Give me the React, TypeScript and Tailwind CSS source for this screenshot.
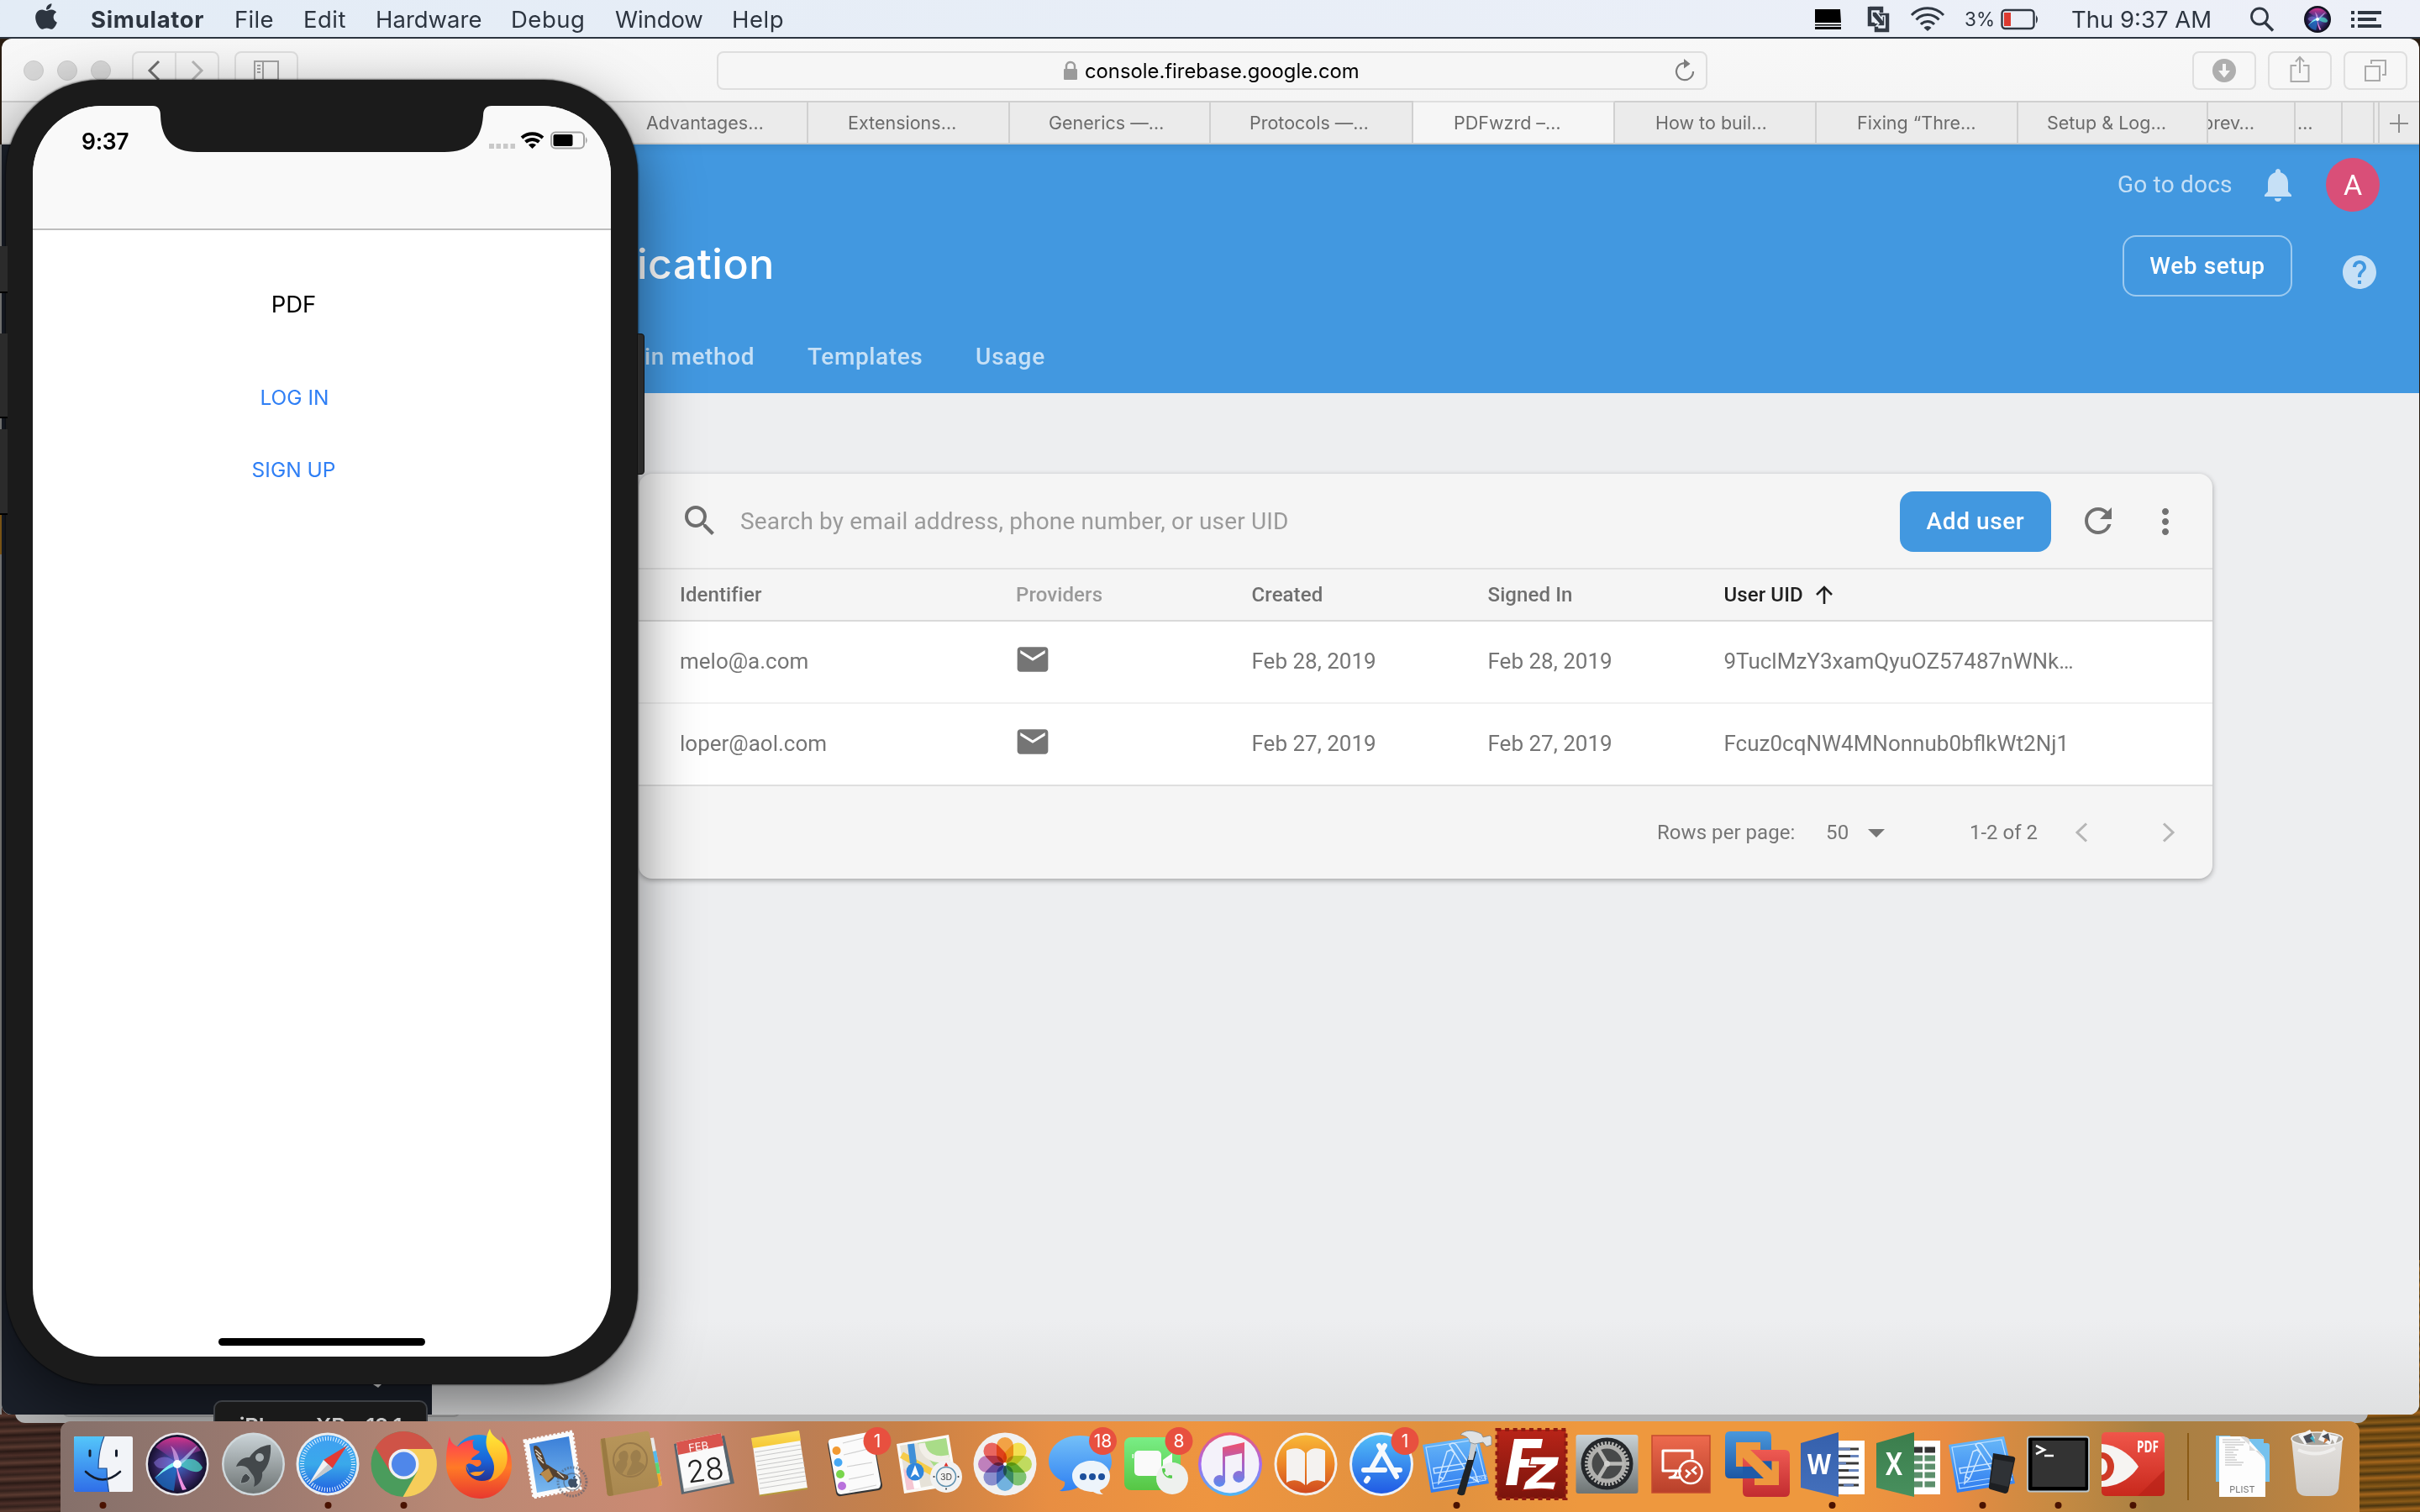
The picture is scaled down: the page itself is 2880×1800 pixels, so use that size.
import React from "react";
import { FaApple } from "react-icons/fa";
import { MdSearch, MdRefresh, MdMoreVert, MdEmail, MdNotifications, MdHelp, MdArrowDropDown, MdPhone } from "react-icons/md";

/* ---------- menu bar ---------- */

const menus = [
  { t: "Simulator", c: "w-[171px] font-bold tracking-[0.7px]" },
  { t: "File", c: "w-[82px] tracking-[0.3px]" },
  { t: "Edit", c: "w-[86px] tracking-[0.5px]" },
  { t: "Hardware", c: "w-[161px]" },
  { t: "Debug", c: "w-[124px] tracking-[0.5px]" },
  { t: "Window", c: "w-[139px] tracking-[-0.1px]" },
  { t: "Help", c: "w-[80px] tracking-[0.5px]" },
];

function SiriOrb({ id }: { id: string }) {
  return (
    <g>
      <defs>
        <radialGradient id={id} cx="50%" cy="50%" r="50%">
          <stop offset="0" stopColor="#3b6fd0" />
          <stop offset="0.6" stopColor="#3a2a6e" />
          <stop offset="1" stopColor="#14102c" />
        </radialGradient>
        <linearGradient id={id + "p"} x1="0" y1="0" x2="0" y2="1">
          <stop offset="0" stopColor="#d8348c" />
          <stop offset="1" stopColor="#7a3fb8" stopOpacity="0.1" />
        </linearGradient>
      </defs>
      <circle r="35" fill={`url(#${id})`} />
      <path d="M-26 -20 A33 33 0 0 1 28 -16 C14 -12 6 -6 0 0 C-8 -8 -16 -14 -26 -20Z" fill={`url(#${id}p)`} />
      <path d="M0 0 C-10 6 -22 10 -27 16 A33 33 0 0 0 -4 32 C-2 20 -2 10 0 0Z" fill="#1c6fc4" opacity="0.75" />
      <path d="M0 0 C10 -8 22 -10 30 4 C26 14 14 8 0 0Z" fill="#4fd8c8" opacity="0.75" />
      <path d="M0 0 C-8 -10 -20 -12 -28 -2 C-24 10 -10 4 0 0Z" fill="#8f7be8" opacity="0.5" />
      <path d="M-1 0 C2 12 6 22 11 30 L6 31 C2 20 -1 10 -1 0Z" fill="#f090e0" />
      <path d="M2 0 C-8 4 -20 10 -27 18 C-18 6 -8 -2 0 -3Z" fill="#7ff0f4" />
      <path d="M0 -2 C10 -8 16 -18 24 -22 C18 -12 10 -4 3 2Z" fill="#c9d8ff" opacity="0.6" />
      <path d="M-2 -1 C-5 -8 -4 -14 -8 -22 C0 -16 2 -8 3 0Z" fill="#f3b8f4" opacity="0.6" />
      <circle r="5" fill="#ffffff" opacity="0.95" />
    </g>
  );
}

function MenuBar() {
  return (
    <div className="relative flex h-[46px] w-full items-start border-b-2 border-[#2c3540] bg-gradient-to-r from-[#e3ecf6] to-[#edf0f8] text-[27.5px] leading-[46px] text-[#2d3540]">
      <div className="flex h-11 w-[108px] shrink-0 justify-start pl-[41px]">
        <FaApple className="mt-[2px] h-[35px] w-[28px]" />
      </div>
      {menus.map((m) => (
        <div key={m.t} className={"shrink-0 whitespace-nowrap " + m.c}>{m.t}</div>
      ))}
      <div className="grow" />
      <div className="flex w-[720px] shrink-0 items-center">
        <svg className="h-11 w-[62px] shrink-0" viewBox="0 0 62 44">
          <path d="M0 10 H30 L31 26 H-1Z M-1 28 H31 V29.500 H-1Z M-1 31 H31 V34 H-1Z" fill="#000" />
        </svg>
        <svg className="h-11 w-[50px] shrink-0" viewBox="0 0 50 44">
          <path d="M3 9 H17 V14 M3 7 V28 H9 M12 17 H24 V35 H11 V27" fill="none" stroke="#333a45" strokeWidth="4.500" />
          <path d="M6 13 H11 L18 22 V18 H21 V30 H11 L14 27 L6 18Z" fill="#333a45" stroke="#e9f0f8" strokeWidth="1.500" />
        </svg>
        <svg className="h-11 w-[66px] shrink-0" viewBox="0 0 66 44">
          <g fill="none" stroke="#2f3742" strokeWidth="3">
            <path d="M3 17 A26 26 0 0 1 41 17" />
            <path d="M8.500 22.500 A18 18 0 0 1 35.500 22.500" />
            <path d="M14 28 A11 11 0 0 1 30 28" />
          </g>
          <path d="M22 36 L17.500 32 A6 6 0 0 1 26.500 32Z" fill="#2f3742" />
        </svg>
        <span className="w-[43px] text-[22.500px]">3%</span>
        <svg className="h-11 w-[84px] shrink-0" viewBox="0 0 84 44">
          <rect x="1.500" y="11" width="38" height="22" rx="4" fill="none" stroke="#2f3742" strokeWidth="2.400" />
          <rect x="4" y="14" width="8" height="16" fill="#dc3a30" />
          <path d="M42 17 Q46 22 42 27Z" fill="#2f3742" />
        </svg>
        <span className="w-[213px] whitespace-nowrap">Thu 9:37 AM</span>
        <svg className="h-11 w-[64px] shrink-0" viewBox="0 0 64 44">
          <circle cx="11" cy="18.500" r="9.500" fill="none" stroke="#2f3742" strokeWidth="2.800" />
          <path d="M17.500 26 L27 35.500" stroke="#2f3742" strokeWidth="3.600" />
        </svg>
        <svg className="h-11 w-[56px] shrink-0" viewBox="0 0 56 44">
          <circle cx="16" cy="22" r="16" fill="#12141f" />
          <g transform="translate(16 22) scale(0.41)"><SiriOrb id="siriMini" /></g>
        </svg>
        <svg className="h-11 w-[40px] shrink-0" viewBox="0 0 40 44">
          <path d="M0 14 H4 M8 14 H36 M0 22 H4 M8 22 H30 M0 30 H4 M8 30 H36" stroke="#2f3742" strokeWidth="4" />
        </svg>
      </div>
    </div>
  );
}

/* ---------- browser ---------- */

const tabs = [
  { t: "Advantages…", c: "w-[280px] pl-[87px]" },
  { t: "Extensions…", c: "w-[240px] pl-[47px]" },
  { t: "Generics —…", c: "w-[239px] pl-[46px]" },
  { t: "Protocols —…", c: "w-[241px] pl-[46px]" },
  { t: "PDFwzrd –…", c: "w-[240px] pl-[48px]", on: true },
  { t: "How to buil…", c: "w-[240px] pl-[48px]" },
  { t: "Fixing “Thre…", c: "w-[240px] pl-[48px]" },
  { t: "Setup & Log…", c: "w-[226px] pl-[34px]" },
  { t: "prev…", c: "w-[104px]", cut: true },
  { t: "…", c: "w-[56px] pl-[2px]" },
  { t: "", c: "w-[38px]" },
  { t: "", c: "w-[6px]" },
];

function ToolButton({ children, className }: { children: React.ReactNode; className: string }) {
  return (
    <div className={"flex h-[46px] shrink-0 items-center justify-center rounded-[8px] border-2 border-[#dfdfdf] bg-[#f7f7f7] " + className}>
      {children}
    </div>
  );
}

function Toolbar() {
  return (
    <div className="flex h-[74px] items-center bg-gradient-to-b from-[#f8f8f8] to-[#f5f5f5] pl-[26px] pt-[2px]">
      <div className="flex w-[129px] gap-4">
        {[0, 1, 2].map((i) => (
          <div key={i} className="h-6 w-6 rounded-full border border-[#cbcbcb] bg-[#d9d9d9]" />
        ))}
      </div>
      <ToolButton className="w-[104px]">
        <svg className="h-[42px] w-[100px]" viewBox="0 0 100 42">
          <path d="M30 10 L19 21 L30 32" fill="none" stroke="#6e6e6e" strokeWidth="3" />
          <path d="M70 10 L81 21 L70 32" fill="none" stroke="#b9b9b9" strokeWidth="3" />
          <path d="M50 0 V42" stroke="#dfdfdf" strokeWidth="2" />
        </svg>
      </ToolButton>
      <ToolButton className="ml-[18px] w-[76px]">
        <svg className="h-6 w-[30px]" viewBox="0 0 30 24">
          <path d="M1 1 H29 V23 H1Z M11 1 V23" fill="none" stroke="#a3a3a3" strokeWidth="2" />
          <path d="M4 6 H8 M4 10 H8 M4 14 H8" stroke="#a3a3a3" strokeWidth="2" />
        </svg>
      </ToolButton>
      <div className="ml-[498px] flex h-[46px] w-[1179px] items-center rounded-[8px] border-2 border-[#dedede] bg-[#f6f6f6] pl-[410px]">
        <svg className="mr-2 h-6 w-[18px]" viewBox="0 0 18 24">
          <rect x="1" y="10" width="16" height="13" rx="1" fill="#9b9b9b" />
          <path d="M4 11 V7 A5 5 0 0 1 14 7 V11" fill="none" stroke="#9b9b9b" strokeWidth="2.400" />
        </svg>
        <span className="w-[702px] pt-[2px] text-[23.800px] leading-[44px] text-black">console.firebase.google.com</span>
        <svg className="h-7 w-6" viewBox="0 0 24 28">
          <path d="M17 6.500 A10 10 0 1 0 22 15" fill="none" stroke="#7d7d7d" strokeWidth="2.200" />
          <path d="M11 0 L18.500 6 L11 11.500Z" fill="#7d7d7d" />
        </svg>
      </div>
      <div className="ml-[577px] flex gap-[14px]">
        <ToolButton className="w-[76px]">
          <svg className="h-7 w-7" viewBox="0 0 28 28">
            <circle cx="14" cy="14" r="14" fill="#aeaeae" />
            <path d="M12 6 H16 V14 H21 L14 22.500 L7 14 H12Z" fill="#f6f6f6" />
          </svg>
        </ToolButton>
        <ToolButton className="w-[76px]">
          <svg className="-mt-1 h-[32px] w-6" viewBox="0 0 24 32">
            <path d="M8 12 H1.500 V31 H22.500 V12 H16 M12 21 V2 M7 7.500 L12 2 L17 7.500" fill="none" stroke="#aaaaaa" strokeWidth="2" />
          </svg>
        </ToolButton>
        <ToolButton className="w-[76px]">
          <svg className="h-[26px] w-[26px]" viewBox="0 0 26 26">
            <path d="M1 8 H18 V25 H1Z M8 5 V1 H25 V18 H21" fill="none" stroke="#aaaaaa" strokeWidth="2" />
          </svg>
        </ToolButton>
      </div>
    </div>
  );
}

function TabBar() {
  return (
    <div className="flex h-[52px] border-y-2 border-[#cfcfcf] bg-[#ebebeb] text-[21.500px] leading-[48px] text-[#6b6b6b]">
      <div className="w-[680px] shrink-0" />
      {tabs.map((t, i) => (
        <div
          key={i}
          className={"shrink-0 overflow-hidden whitespace-nowrap border-r-2 border-[#d0d0d0] " + t.c + (t.on ? " -mt-[2px] border-t-2 border-t-[#dedede] bg-[#f6f6f6]" : "")}
        >
          <span className={t.cut ? "-ml-[7px]" : ""}>{t.t}</span>
        </div>
      ))}
      <svg className="h-12 w-[44px]" viewBox="0 0 44 48">
        <path d="M12 25 H34 M23 14 V36" stroke="#8c8c8c" strokeWidth="2" />
      </svg>
    </div>
  );
}

const columns = "grid grid-cols-[400px_280.500px_281px_281px_1fr] items-center pl-[49px]";
const users = [
  { id: "melo@a.com", date: "Feb 28, 2019", uid: "9TuclMzY3xamQyuOZ57487nWNk…", c: "border-[#f0f0f0]" },
  { id: "loper@aol.com", date: "Feb 27, 2019", uid: "Fcuz0cqNW4MNonnub0bflkWt2Nj1", c: "border-[#dfdfdf]" },
];

function Console() {
  return (
    <div className="flex h-[1512px] flex-col bg-[#edeef0] font-[Roboto,sans-serif]">
      <div className="flex h-[296px] shrink-0 justify-between bg-[#4298e0] shadow-[inset_0_10px_10px_-6px_rgba(0,0,0,0.08)]">
        <div className="ml-[756px] flex flex-col pt-[112px]">
          <div className="h-16 font-[Inter,sans-serif] text-[50px] font-medium leading-[60px] tracking-[0.5px] text-white">ication</div>
          <div className="mt-[60px] flex text-[28px] font-medium leading-[34px] tracking-[0.6px] text-[#c6e0f6]">
            <div className="w-[203px] whitespace-nowrap pl-[9px]">in method</div>
            <div className="w-[200px]">Templates</div>
            <div className="tracking-[0.9px]">Usage</div>
          </div>
        </div>
        <div className="mr-[47px] flex w-[312px] flex-col pt-4">
          <div className="flex h-16 items-center text-[28px] text-[#c6e0f6]">
            <span className="w-[167px] whitespace-nowrap tracking-[0.2px]">Go to docs</span>
            <MdNotifications className="h-[48px] w-[48px]" />
            <div className="ml-auto flex h-16 w-16 items-center justify-center rounded-full bg-[#d94f78] text-[34px] text-white">A</div>
          </div>
          <div className="mt-7 flex items-start justify-between pl-[6px]">
            <div className="flex h-[73px] w-[202px] items-center justify-center rounded-[16px] border-2 border-[#9dcaef] text-[28px] font-medium tracking-[0.6px] text-white">
              Web setup
            </div>
            <MdHelp className="mt-5 h-12 w-12 text-[#c6e0f6]" />
          </div>
        </div>
      </div>

      <div className="ml-[758px] mt-24 flex h-[482px] w-[1873px] flex-col overflow-hidden rounded-[16px] bg-[#f5f5f5] text-[#757575] shadow-[0_2px_6px_rgba(0,0,0,0.32)]">
        <div className="flex h-[114px] shrink-0 items-center border-b-2 border-[#e1e1e1] pl-[49px]">
          <MdSearch className="h-12 w-12 text-[#6f6f6f]" />
          <span className="ml-[24px] w-[1380px] pt-[2px] text-[28px] tracking-[0.160px] text-[#9a9a9a]">Search by email address, phone number, or user UID</span>
          <div className="mt-[2px] flex h-[72px] w-[180px] items-center justify-center rounded-[16px] bg-[#4298e0] text-[28px] font-medium tracking-[0.6px] text-white">
            Add user
          </div>
          <MdRefresh className="ml-[32px] h-12 w-12 text-[#717171]" />
          <MdMoreVert className="ml-[32px] mt-[2px] h-12 w-12 text-[#717171]" />
        </div>
        <div className={"h-[62px] shrink-0 border-b-2 border-[#d9d9d9] text-[24px] font-medium tracking-[0.1px] text-[#6f6f6f] " + columns}>
          <div>Identifier</div>
          <div className="text-[#999999]">Providers</div>
          <div>Created</div>
          <div>Signed In</div>
          <div className="flex items-center text-[#212121]">
            <span>User UID</span>
            <svg className="ml-[14px] h-[22px] w-[22px]" viewBox="0 0 22 22"><path d="M11 22 V2 M2 11 L11 2 L20 11" fill="none" stroke="#212121" strokeWidth="2.600" /></svg>
          </div>
        </div>
        {users.map((u) => (
          <div key={u.id} className={"h-[98px] shrink-0 border-b-2 bg-white pb-[2px] text-[26px] " + u.c + " " + columns}>
            <div>{u.id}</div>
            <MdEmail className="-ml-[2px] -mt-[5px] h-[44px] w-[44px]" />
            <div>{u.date}</div>
            <div>{u.date}</div>
            <div className="whitespace-nowrap">{u.uid}</div>
          </div>
        ))}
        <div className="flex h-[110px] items-center pl-[1212px] text-[24px]">
          <span className="w-[201px] whitespace-nowrap tracking-[0.050px]">Rows per page:</span>
          <span className="w-[36px] tracking-[0.3px]">50</span>
          <MdArrowDropDown className="h-12 w-12" />
          <span className="ml-[87px] w-[125px] whitespace-nowrap">1-2 of 2</span>
          <svg className="h-6 w-[120px]" viewBox="0 0 120 24">
            <path d="M14 1.500 L3 12 L14 22.500 M106 1.500 L117 12 L106 22.500" fill="none" stroke="#b5b5b5" strokeWidth="3" />
          </svg>
        </div>
      </div>
      <div className="grow" />
      <div className="h-28 bg-gradient-to-b from-[#edeef0] to-[#dfe0e1]" />
    </div>
  );
}

function Browser() {
  return (
    <div className="absolute left-[2px] top-[46px] h-[1638px] w-[2877px] overflow-hidden rounded-[12px]">
      <Toolbar />
      <TabBar />
      <Console />
    </div>
  );
}

/* ---------- phone ---------- */

function Phone() {
  return (
    <div className="absolute left-[7px] top-[95px] h-[1553px] w-[752px] rounded-[112px] bg-[#1b1b1b] px-[32px] pt-[31px] shadow-[0_26px_70px_rgba(0,0,0,0.5),0_0_2px_1px_rgba(0,0,0,0.5)]">
      <div className="absolute right-[-8px] top-[302px] h-[168px] w-[9px] rounded-r-[4px] border border-[#111111] bg-[#2b2b2b]" />
      <div className="absolute left-[-9px] top-[198px] h-[56px] w-[11px] border-b-2 border-black bg-[#2b2b2b]" />
      <div className="absolute left-[-9px] top-[302px] h-[101px] w-[11px] border-b-2 border-black bg-[#2b2b2b]" />
      <div className="absolute left-[-9px] top-[416px] h-[102px] w-[11px] border-b-2 border-black bg-[#2b2b2b]" />
      <div className="relative flex h-[1489px] w-[688px] flex-col items-center overflow-hidden rounded-[82px] bg-white">
        <svg className="absolute left-[140px] top-0 h-[56px] w-[410px]" viewBox="140 0 410 56">
          <path d="M143 0 Q152 0 152 12 C153 40 167 55 196 55 H490 C520 55 534 40 536 12 Q536 0 546 0Z" fill="#1b1b1b" />
        </svg>
        <div className="flex h-[148px] w-full shrink-0 border-b-2 border-[#bdbdbd] bg-[#f9f9f9] pl-[58px] pt-[26px]">
          <span className="w-[485px] text-[26.500px] font-semibold leading-[32px] tracking-[-0.3px] text-black">9:37</span>
          <svg className="mt-[3px] h-6 w-[120px]" viewBox="0 0 120 24">
            <path d="M0 16 H6 V22 H0Z M8.500 16 H14 V22 H8.500Z M17 16 H22.500 V22 H17Z M25.500 16 H31 V22 H25.500Z" fill="#c9c9c9" />
            <g fill="none" stroke="#000" strokeWidth="4">
              <path d="M39 9 A19 19 0 0 1 64 9" />
              <path d="M43.500 14 A12 12 0 0 1 59.500 14" />
            </g>
            <path d="M51.500 22 L47 17.500 A6.500 6.500 0 0 1 56 17.500Z" fill="#000" />
            <rect x="74" y="2.500" width="39" height="19" rx="5" fill="none" stroke="#a2a2a2" strokeWidth="2" />
            <rect x="76.500" y="5" width="23" height="14" rx="2" fill="#000" />
            <path d="M115 8 Q118.500 12 115 16Z" fill="#a2a2a2" />
          </svg>
        </div>
        <div className="flex w-full flex-col items-center pr-[67px] pt-[71px] leading-[34px]">
          <span className="text-[27.500px] text-black">PDF</span>
          <span className="mt-[77px] pl-[2px] text-[24.500px] text-[#2f7ff5]">LOG IN</span>
          <span className="mt-[52px] text-[24.500px] text-[#2f7ff5]">SIGN UP</span>
        </div>
        <div className="mb-[13px] mt-auto h-[9px] w-[246px] rounded-full bg-black" />
      </div>
    </div>
  );
}

/* ---------- dock ---------- */

function DockIcon({ children, dot, badge, bx = 71 }: { children: React.ReactNode; dot?: boolean; badge?: string; bx?: number }) {
  return (
    <svg className="h-[108px] w-[89.500px] shrink-0 overflow-visible" viewBox="0 0 89.500 108">
      {children}
      {badge && (
        <g>
          <circle cx={bx} cy="23.500" r="16.500" fill="#e8503f" />
          <text x={bx} y="31" textAnchor="middle" fontSize="21" fill="#fff" fontFamily="Inter">{badge}</text>
        </g>
      )}
      {dot && <circle cx="44.500" cy="100" r="4" fill="#4a1200" />}
    </svg>
  );
}

function Grad({ id, a, b, c }: { id: string; a: string; b: string; c?: string }) {
  return (
    <linearGradient id={id} x1="0" y1="0" x2="0" y2="1">
      <stop offset="0" stopColor={a} />
      {c && <stop offset="0.5" stopColor={c} />}
      <stop offset="1" stopColor={b} />
    </linearGradient>
  );
}

function Blueprint() {
  return (
    <g>
      <path d="M4 28 L70 18 L83 74 L14 85Z" fill="url(#bp)" />
      <path d="M8 31 L67 22 L79 70 L17 80Z" fill="none" stroke="#bfe0ff" strokeWidth="1.200" />
      <g fill="none" stroke="#cfe8ff" strokeWidth="1.500">
        <path d="M33 36 L38 34 L42 38 L29 68 L23 74 L24 66Z M28 68 L24 66" />
        <path d="M36 28 Q40 24 44 28 L66 60 L70 72 L60 66Z" />
        <path d="M17 56 L62 49 L63 55 L18 62Z" />
      </g>
      <path d="M15 74 L80 64" stroke="#bfe0ff" strokeWidth="1" />
    </g>
  );
}

const petals = ["#f2962c", "#f4dc3a", "#b9d84a", "#6dbb5e", "#5fa9dc", "#7a7fc8", "#b86fb4", "#e8524a"];

function Dock() {
  return (
    <div className="absolute left-[72px] top-[1692px] flex h-[108px] w-[2736px] rounded-t-[12px] bg-[linear-gradient(90deg,#85706a_0%,#9c7a70_9%,#b98874_17%,#cb8a72_26%,#bb7e55_32%,#c98147_37%,#e88e42_43%,#ee9540_50%,#e0913f_60%,#ee983e_66%,#ee983e_77%,#e98c42_82%,#c58a42_87%,#a88043_91%,#b08044_95%,#c6863e_100%)] pl-[5.500px]">
      <svg className="absolute h-0 w-0">
        <defs>
          <Grad id="bp" a="#69b9f8" b="#2f7cf0" />
          <Grad id="fL" a="#54c6fa" b="#2f6ee8" />
          <Grad id="gray" a="#c9d2d6" b="#6e7474" />
          <Grad id="saf" a="#3f9ff2" b="#1f5fe0" c="#3aa9ea" />
          <Grad id="ff" a="#ff3a58" b="#e8382f" c="#ff7a26" />
          <Grad id="ffb" a="#1c94e8" b="#28237a" c="#1a62d8" />
          <Grad id="ffy" a="#ffee3a" b="#ff9a1f" />
          <Grad id="sky" a="#3a7fd8" b="#7ab8ee" />
          <Grad id="tan" a="#b8965a" b="#a98850" />
          <Grad id="yel" a="#fadb5c" b="#f6c832" />
          <Grad id="msg" a="#74c0f8" b="#2f80f2" />
          <Grad id="ft" a="#79ee86" b="#56c644" />
          <Grad id="itr" a="#f2586a" b="#4db8f4" c="#a46af0" />
          <Grad id="itn" a="#f0506a" b="#5a8af0" c="#a862c8" />
          <Grad id="bk" a="#f8b838" b="#d0491f" c="#ec8626" />
          <Grad id="as" a="#53bff8" b="#205ae4" />
          <Grad id="fz" a="#b82418" b="#7a140c" />
          <Grad id="rdp" a="#ee6a4e" b="#b8402a" />
          <Grad id="vb" a="#4a98dc" b="#1d57a4" />
          <Grad id="vr" a="#ee5a52" b="#c22c30" />
          <Grad id="wd" a="#3560ac" b="#4470bc" />
          <Grad id="xl" a="#3b7d4c" b="#48905e" />
          <Grad id="pdf" a="#f0564a" b="#c8281c" />
          <Grad id="bin" a="#e6e6e6" b="#cfcfcf" />
        </defs>
      </svg>

      {/* Finder */}
      <DockIcon dot>
        <rect x="10" y="18" width="70" height="66" rx="2" fill="#f2f4f8" />
        <path d="M12 18 H46 C41 30 39 42 39 56 H49 C49 66 50 76 51.500 84 H12 Q10 84 10 82 V20 Q10 18 12 18Z" fill="url(#fL)" />
        <path d="M29 35 V41 M60.500 35 V41" stroke="#141c2c" strokeWidth="3" strokeLinecap="round" />
        <path d="M24 60 Q44 79 65 60" fill="none" stroke="#141c2c" strokeWidth="2.600" strokeLinecap="round" />
        <path d="M46 18 C41 30 39 42 39 56 H49 C49 66 50 76 51.500 84" fill="none" stroke="#1d4b8c" strokeWidth="1.200" />
      </DockIcon>
      {/* Siri */}
      <DockIcon>
        <circle cx="44" cy="51" r="37.500" fill="#e8e6ea" />
        <g transform="translate(44 51)"><SiriOrb id="siriDock" /></g>
      </DockIcon>
      {/* Launchpad */}
      <DockIcon>
        <circle cx="44.500" cy="51" r="37.500" fill="#cfd8dc" />
        <circle cx="44.500" cy="51" r="35" fill="url(#gray)" />
        <path d="M66 28 C54 29 46 35 41 43 C33 42 27 48 25 54 C31 52 36 53 39 56 L44 63 C47 66 48 72 46 78 C53 75 57 69 56 61 C64 54 67 40 66 28Z" transform="translate(-1 0)" fill="#43484b" />
        <path d="M36 62 L41 67 C39 73 34 74 29 74 C30 69 31 64 36 62Z" fill="#43484b" stroke="#9aa2a4" strokeWidth="1" />
        <circle cx="52" cy="43" r="5" fill="#a9b1b4" />
      </DockIcon>
      {/* Safari */}
      <DockIcon dot>
        <circle cx="44" cy="51" r="37.500" fill="#e9ecef" />
        <circle cx="44" cy="51" r="34.500" fill="url(#saf)" />
        <circle cx="44" cy="51" r="30.500" fill="none" stroke="#e6f3ff" strokeWidth="5" strokeDasharray="1 2.190" />
        <path d="M67 29 L49.500 56 L39 46Z" fill="#e23b34" />
        <path d="M22 74 L39 46 L49.500 56Z" fill="#f2f2f2" />
        <path d="M22 74 L44.500 51 L49.500 56Z" fill="#c3c8cc" />
      </DockIcon>
      {/* Chrome */}
      <DockIcon dot>
        <circle cx="44.500" cy="51" r="39" fill="#4a9c5c" />
        <path d="M44.500 51 L10.500 32 A39 39 0 0 1 79.500 33.500 L44.500 33Z" fill="#cf5347" />
        <path d="M44.500 33 H79.500 A39 39 0 0 1 43.500 90 L60.500 60Z" fill="#f6cd5a" />
        <path d="M11 31.500 L29 61 L44.500 50Z" fill="#cf5347" />
        <circle cx="44.500" cy="51" r="18" fill="#f1f1f1" />
        <circle cx="44.500" cy="51" r="14.500" fill="#4f87ea" />
      </DockIcon>
      {/* Firefox */}
      <DockIcon>
        <circle cx="45" cy="47" r="31" fill="url(#ffb)" />
        <path d="M10 18 C8 26 6 34 6 46 C4 72 24 92 46 92 C70 92 84 72 84 52 C84 38 78 26 72 18 C74 28 76 38 72 52 C68 66 54 74 42 70 C34 67 28 60 30 52 C34 48 38 52 42 54 C46 54 50 50 46 46 L36 46 C36 42 44 40 46 36 C42 34 38 34 38 30 C38 26 36 24 40 22 C30 22 24 26 20 30 C14 28 11 24 10 18Z" fill="url(#ff)" />
        <path d="M58 9 C52 20 52 30 58 40 C66 52 64 64 56 72 C74 68 84 48 76 30 C72 22 60 20 58 9Z" fill="url(#ffy)" />
        <path d="M30 52 C32 66 46 70 52 58 C46 62 42 58 34 62Z" fill="#ff9a2a" />
      </DockIcon>
      {/* Mail */}
      <DockIcon>
        <path d="M9 23 L66 12 L76 80 L20 91Z" fill="#fbfbfb" stroke="#fbfbfb" strokeWidth="3" strokeDasharray="3 2" />
        <path d="M15 27 L62 18 L71 76 L24 85Z" fill="url(#sky)" />
        <path d="M20 30 C26 26 30 36 35 51 C42 54 48 61 60 64 C63 67 61 71 55 70 L45 66 C42 70 38 74 36 72 L35 65 L27 64 L32 58 C26 50 20 40 20 30Z" fill="#54402e" />
        <path d="M28 62 L38 56 L43 66 L36 72Z" fill="#b98a4a" />
        <path d="M22 34 L29 40 M23 38 L30 45 M25 43 L32 50 M48 60 L56 67" stroke="#e3d9cb" strokeWidth="1.500" />
        <circle cx="66" cy="72" r="17" fill="none" stroke="#4c5a6c" strokeWidth="3" strokeDasharray="2 1.500" opacity="0.55" />
        <circle cx="66" cy="72" r="10" fill="none" stroke="#4c5a6c" strokeWidth="1.500" opacity="0.6" />
        <FaApple x="59" y="64" width="14" height="15" color="#3e4f66" />
      </DockIcon>
      {/* Contacts */}
      <DockIcon>
        <path d="M70 20 L74 19.500 L84 76 L76 78Z" fill="#e8e8e8" />
        <path d="M72.500 36 L77 35 L79.500 49 L74 50Z" fill="#55b9ec" />
        <path d="M74 50 L79.500 49 L81.500 62 L76 63Z" fill="#5bd672" />
        <path d="M76 63 L81.500 62 L84 76 L78 78Z" fill="#f0a82c" />
        <path d="M11 21 L64 12 Q68 11 69 15 L80 74 Q80 78 76 79 L22 89 Q19 89 18.500 86 L10 25Z" fill="url(#tan)" />
        <path d="M11 21 L16 20 L26 88 L22 89 Q19 89 18.500 86Z" fill="#9a7a42" />
        <circle cx="46" cy="46" r="20" fill="none" stroke="#98794a" strokeWidth="2" />
        <path d="M36 36 C42 32 46 40 42 48 C44 54 38 58 36 64 C28 60 26 50 34 46 C31 42 32 38 36 36Z M54 34 C60 36 60 44 56 48 C60 50 64 52 63 54 C62 58 50 66 42 64 C42 58 48 54 48 48 C44 42 48 34 54 34Z" fill="#9c7e4c" />
      </DockIcon>
      {/* Calendar */}
      <DockIcon>
        <path d="M8 27 L68 17 L80 74 L17 87Z" fill="#59656e" />
        <path d="M11 29 L64 19 L75 73 L20 84Z" fill="#d8d8d8" />
        <path d="M11 25 L64 14 L74 69 L20 80Z" fill="#fafafa" />
        <path d="M11 25 L64 14 L67 29 L13 40Z" fill="#d9544d" />
        <g transform="rotate(-8 44 50)" textAnchor="middle" fontFamily="Inter">
          <text x="40" y="34" fontSize="13" fill="#fff">FEB</text>
          <text x="44" y="71" fontSize="36" fontWeight="300" fill="#222">28</text>
        </g>
      </DockIcon>
      {/* Notes */}
      <DockIcon>
        <path d="M12 22 L68 14 L78 80 L21 89Z" fill="#f8f8f6" />
        <path d="M11 20 L68 11 L70 23 L13 32Z" fill="url(#yel)" />
        <g stroke="#c9c9c9" strokeWidth="1.200">
          <path d="M15 37 L70 28 M16 42 L71 33 M17 48 L72 39 M18 53 L73 44 M18 58 L74 49 M19 64 L75 55 M20 69 L75 60 M21 74 L76 65 M21 80 L77 71" />
        </g>
        <path d="M21 88.500 L78 80" stroke="#b59a3c" strokeWidth="2" />
      </DockIcon>
      {/* Reminders */}
      <DockIcon badge="1" bx={71}>
        <path d="M15 23 L60 15 Q65 14 66 19 L77 76 Q77 81 73 82 L28 89 Q23 90 22 85 L12 28 Q12 24 15 23Z" fill="#333537" />
        <path d="M16 21 L60 13 Q64 12 65 17 L75 74 Q75 79 72 80 L28 87 Q24 87 23 83 L13 27 Q12 22 16 21Z" fill="#fbfbfb" />
        <path d="M30 26 L58 19 M31 40 L60 33 M35 54 L65 49 M37 69 L67 63 M38 83 L70 76" stroke="#cfcfcf" strokeWidth="1.200" />
        <circle cx="22.500" cy="35" r="5" fill="#f29a32" /><circle cx="24.500" cy="49" r="5" fill="#45a8f4" />
        <circle cx="27" cy="63" r="5" fill="#79d64c" /><circle cx="29" cy="77" r="5" fill="#b972dc" />
      </DockIcon>
      {/* Maps */}
      <DockIcon>
        <path d="M5 27 L67 16 L77 76 L14 86Z" fill="#fbfaf7" />
        <path d="M9 29 L64 20 L72 72 L17 82Z" fill="#e6e2d8" />
        <path d="M30 26 L64 20 L69 50 L50 54Z" fill="#a9dc88" />
        <path d="M35 26 C37 42 51 48 68 44" fill="none" stroke="#f2efe8" strokeWidth="8" />
        <path d="M11 40 L46 60 L66 68" fill="none" stroke="#f6cc4a" strokeWidth="8" />
        <path d="M13 56 L30 66 L32 80 L17 82Z" fill="#f5c6d2" />
        <path d="M22 27 L25 50" fill="none" stroke="#3f8fd8" strokeWidth="8" />
        <path d="M28 70 L30 80" fill="none" stroke="#ffffff" strokeWidth="8" />
        <circle cx="27" cy="60" r="10.500" fill="#2f86dd" />
        <path d="M27 52 L32.500 67 L27 63 L21.500 67Z" fill="#fff" />
        <circle cx="64" cy="66" r="19" fill="#f2f2f2" />
        <circle cx="64" cy="66" r="11.500" fill="none" stroke="#5c8fae" strokeWidth="1.500" />
        <path d="M64 49 L66.500 53.500 H61.500Z" fill="#e03028" />
        <circle cx="49.500" cy="66" r="1" fill="#333" /><circle cx="78.500" cy="66" r="1" fill="#333" /><circle cx="64" cy="80.500" r="1" fill="#333" />
        <text x="64" y="70" textAnchor="middle" fontSize="10.500" fontFamily="Inter" fill="#444">3D</text>
      </DockIcon>
      {/* Photos */}
      <DockIcon>
        <circle cx="44" cy="51" r="37.500" fill="#f1f1f1" />
        <g className="isolate">
          {petals.map((p, i) => (
            <rect key={p} x="34" y="19" width="20" height="31" rx="10" fill={p} opacity="0.88" className="mix-blend-multiply" transform={`rotate(${i * 45} 44 51)`} />
          ))}
        </g>
        <circle cx="44" cy="51" r="2" fill="#fff" />
      </DockIcon>
      {/* Messages */}
      <DockIcon badge="18" bx={71.5}>
        <path d="M44 17 C66 17 82 30 82 48 C82 64 66 76 46 77 C40 80 30 84 20 83 C25 80 27 76 26 72 C14 68 7 58 7 48 C7 30 22 17 44 17Z" fill="url(#msg)" />
        <path d="M58 47 C72 47 80 56 80 65 C80 73 76 79 68 82 C68 84 70 86 72 87 C66 87 63 86 60 84 C44 84 35 75 35 65 C35 55 45 47 58 47Z" fill="#edf4fb" />
        <circle cx="48" cy="66" r="4" fill="#1d4f9c" /><circle cx="59" cy="66" r="4" fill="#1d4f9c" /><circle cx="70" cy="66" r="4" fill="#1d4f9c" />
      </DockIcon>
      {/* FaceTime */}
      <DockIcon badge="8" bx={72}>
        <rect x="7" y="19" width="67" height="63" rx="8" fill="url(#ft)" />
        <rect x="19" y="35" width="32" height="30" rx="5" fill="#fafafa" />
        <path d="M53 46 L64 38 V62 L53 55Z M18 39 H16.500 V44 H18Z" fill="#fafafa" />
        <circle cx="64" cy="68" r="19" fill="#eef1ee" />
        <MdPhone x="50" y="54" width="28" height="28" color="#55cc4c" />
      </DockIcon>
      {/* iTunes */}
      <DockIcon>
        <circle cx="44" cy="51" r="38" fill="url(#itr)" />
        <circle cx="44" cy="51" r="34.500" fill="#f4f2fa" />
        <path d="M35 31 L61 25 V64 A7 7 0 1 1 58 60 V38 L38 42 V69 A7 7 0 1 1 35 65Z" fill="url(#itn)" />
      </DockIcon>
      {/* Books */}
      <DockIcon>
        <circle cx="44" cy="51" r="37.500" fill="#f2f0ee" />
        <circle cx="44" cy="51" r="34.500" fill="url(#bk)" />
        <path d="M43 38 C39 31 28 31 21 35 V73 C29 68 38 70 43 76Z M45 38 C49 31 60 31 67 35 V73 C59 68 50 70 45 76Z" fill="#f4f2f0" />
      </DockIcon>
      {/* App Store */}
      <DockIcon badge="1" bx={73}>
        <circle cx="45" cy="51" r="38" fill="#eef2f6" />
        <circle cx="45" cy="51" r="35" fill="url(#as)" />
        <path d="M49 29 L33 57 M42 29 L63 66 M24 58 H49 M59 58 H67 M29 68 L27 71" stroke="#f6f9fc" strokeWidth="6" strokeLinecap="round" />
      </DockIcon>
      {/* Xcode */}
      <DockIcon dot>
        <Blueprint />
        <text x="64" y="71" fontSize="5" fill="#cfe8ff" fontFamily="Inter" transform="rotate(-8 64 71)">XCODE</text>
        <path d="M61 34 L68 36 L54 87 Q50 90 45 86Z" fill="#1f2326" />
        <path d="M62 24 L69 26 L64 46 L58 46Z" fill="#c9cdd0" />
        <path d="M49 16 C54 10 64 10 74 15 L76 19 L84 17 L86 19 V28 L80 30 L76 25 L66 27 L60 25 C60 20 55 17 49 16Z" fill="#dfe2e4" stroke="#7e8488" strokeWidth="0.800" />
      </DockIcon>
      {/* FileZilla */}
      <DockIcon>
        <rect x="3.500" y="10" width="82" height="82" fill="url(#fz)" stroke="#8f1a10" strokeWidth="4" strokeDasharray="5 4.600" />
        <path d="M24 21 H58 L56 32 H34 L32 45 H52 L50 55 H30 L27 76 H14Z" fill="#fff" />
        <path d="M44 42 H78 L76 52 L52 72 H74 L71 82 Q60 79 34 82 L37 72 L60 52 H42Z" fill="#fff" stroke="#a01d12" strokeWidth="1.500" />
      </DockIcon>
      {/* System Preferences */}
      <DockIcon>
        <rect x="7.500" y="16" width="74" height="70" rx="3" fill="url(#gray)" />
        <circle cx="44.500" cy="50.500" r="31" fill="#24272a" />
        <circle cx="44.500" cy="50.500" r="24.500" fill="none" stroke="#b5b5b2" strokeWidth="4" strokeDasharray="2.400 1.900" />
        <circle cx="44.500" cy="50.500" r="20.500" fill="#484a4a" stroke="#b0b0ad" strokeWidth="5" />
        <path d="M44.500 50.500 L34 33 M44.500 50.500 H65 M44.500 50.500 L34 68" stroke="#b8b8b5" strokeWidth="4.500" />
        <circle cx="44.500" cy="50.500" r="3.500" fill="#d0d0cd" />
      </DockIcon>
      {/* Remote Desktop */}
      <DockIcon>
        <rect x="9" y="17" width="69" height="68" fill="url(#rdp)" stroke="#c5492f" strokeWidth="1.500" />
        <path d="M44 59 H22 V35 H57 V45 M38 60 Q37 67 30 67 H42" fill="none" stroke="#fff" strokeWidth="3" strokeLinejoin="round" />
        <circle cx="55" cy="60.500" r="13.500" fill="none" stroke="#fff" strokeWidth="2.600" />
        <path d="M49 58 L54 62 L49 67 M62 54 L57 58.500 L62 63" fill="none" stroke="#fff" strokeWidth="2.600" />
      </DockIcon>
      {/* VMware Fusion */}
      <DockIcon>
        <path fillRule="evenodd" d="M12 12 H55 Q61 12 61 18 V68 H12 Q6 68 6 62 V18 Q6 12 12 12Z M19 25 V54 H48 V25Z" fill="url(#vb)" />
        <path fillRule="evenodd" d="M27 34 H77 Q83 34 83 40 V84 Q83 90 77 90 H33 Q27 90 27 84Z M41 47.500 V76 H70 V47.500Z" fill="url(#vr)" />
        <path d="M27 54 H41 L53 68 H27Z M48 47.500 H61.500 V59Z" fill="#1f5aa8" />
        <path d="M27 34 H36 L62 59 L70 67 V76 H61 L52 68 L27 43Z" fill="#ee983e" />
      </DockIcon>
      {/* Word */}
      <DockIcon dot>
        <rect x="45" y="23" width="38" height="64" fill="#fff" />
        <path d="M52 33 H76 M52 41.500 H76 M52 50 H76 M52 58.500 H76 M52 67 H76 M52 76 H76" stroke="#3a3a3a" strokeWidth="3.200" />
        <path d="M52 33 H66 M66 41.500 H76 M52 50 H61 M64 58.500 H76 M58 76 H70" stroke="#6784bc" strokeWidth="3.200" />
        <path d="M7 26 L52 13 V90 L7 79Z" fill="url(#wd)" />
        <text x="29" y="63" textAnchor="middle" fontSize="34" fontWeight="700" fontFamily="Open Sans" fill="#fff" textLength="28" lengthAdjust="spacingAndGlyphs">W</text>
      </DockIcon>
      {/* Excel */}
      <DockIcon>
        <rect x="45" y="23" width="38" height="64" fill="#fff" />
        <path d="M52 34 H62 M64.500 34 H77" stroke="#333" strokeWidth="7" />
        <path d="M52 44 H62 M64.500 44 H77 M52 54 H62 M64.500 54 H77 M52 64 H62 M64.500 64 H77 M52 75 H62 M64.500 75 H77" stroke="#5c8f6c" strokeWidth="7" />
        <path d="M7 26 L52 13 V90 L7 79Z" fill="url(#xl)" />
        <text x="28" y="64" textAnchor="middle" fontSize="38" fontWeight="700" fontFamily="Open Sans" fill="#fff" textLength="20" lengthAdjust="spacingAndGlyphs">X</text>
      </DockIcon>
      {/* iOS Simulator */}
      <DockIcon dot>
        <Blueprint />
        <path d="M57 38 L81 42 Q84 43 83 46 L75 83 Q74 86 71 86 L54 81 Q51 80 52 77Z" fill="#1d1f22" />
        <path d="M58 45 L81 49 L75 78 L54 73Z" fill="#2f3236" />
      </DockIcon>
      {/* Terminal */}
      <DockIcon dot>
        <rect x="8" y="18.500" width="73" height="65" rx="3" fill="#000" stroke="#b9c6cc" strokeWidth="1.800" />
        <rect x="13.500" y="23" width="63" height="55" fill="#333" />
        <path d="M18 29 L28 34 L18 39 M28 41 H39" fill="none" stroke="#fff" strokeWidth="2.600" />
      </DockIcon>
      {/* PDF reader */}
      <DockIcon dot>
        <rect x="7" y="13" width="75" height="76" rx="5" fill="url(#pdf)" />
        <path d="M82 58 L50 89 H77 Q82 89 82 84Z" fill="#b82218" opacity="0.700" />
        <path d="M7 27 C26 28 42 40 51 54 C42 68 26 78 7 78Z" fill="#f6f4f2" />
        <path d="M7 37 A15 17 0 0 1 7 71Z" fill="#cf3a26" />
        <path d="M7 44 A7 10 0 0 1 7 64Z" fill="#f6f4f2" />
        <text x="49" y="37" fontSize="20" fontWeight="700" fontFamily="Open Sans" fill="#fff" textLength="26" lengthAdjust="spacingAndGlyphs">PDF</text>
      </DockIcon>
      <div className="flex w-[40px] shrink-0 justify-center pt-[14px]"><div className="h-[80px] w-[2px] bg-[#8a5a16]" /></div>
      {/* Property list stack */}
      <DockIcon>
        <path d="M13 17 H30 L32 21 H70 V26 H74 Q77 26 77 29 V72 H13Z" fill="#76c2ee" />
        <path d="M17 18 H42 Q50 18 52 22 L70 42 Q72 46 72 52 V90 H17Z" fill="#fdfdfd" />
        <path d="M42 18 Q52 18 53 22 V35 H64 L72 46" fill="#dcdcdc" />
        <path d="M21 22 H42 M21 25 H48 M24 28 H46 M24 31 H36 M24 34 H40 M24 37 H34 M24 40 H38 M24 43 H36 M24 46 H38 M24 49 H46 M24 52 H44" stroke="#b8b8b8" strokeWidth="1" />
        <text x="44.500" y="85" textAnchor="middle" fontSize="11" fontFamily="Inter" fill="#777">PLIST</text>
      </DockIcon>
      {/* Trash */}
      <DockIcon>
        <path d="M14 20 H75 L70 80 Q68 89 58 89 H32 Q22 89 20 80Z" fill="url(#bin)" opacity="0.950" />
        <ellipse cx="44.500" cy="21" rx="30.500" ry="8" fill="#a9a49c" stroke="#f0f0f0" strokeWidth="1.500" />
        <path d="M22 17 L36 10 L42 20 L30 28Z M46 22 L52 10 L64 18 L60 28Z M60 16 L70 18 L66 28Z" fill="#f4f4f4" />
        <path d="M28 18 L38 14 L40 24 L32 26Z M50 18 L58 14 L60 24Z" fill="#4b4f58" />
        <path d="M36 20 L40 17 L42 26Z" fill="#3fb0c8" /><path d="M54 20 L58 22 L52 27Z" fill="#c8763a" />
        <path d="M22 34 Q44 44 66 32" fill="none" stroke="#fafafa" strokeWidth="4" opacity="0.600" />
      </DockIcon>
    </div>
  );
}

/* ---------- desktop ---------- */

export default function App() {
  return (
    <div className="relative h-[1800px] w-[2880px] overflow-hidden bg-[#2a1d12] font-[Inter,sans-serif]">
      <div className="absolute left-0 top-[1500px] h-[300px] w-[90px] bg-[repeating-linear-gradient(178deg,#2a1a16_0px,#4c2f28_5px,#33211c_9px,#5a3a30_14px,#2a1a16_19px)]" />
      <div className="absolute left-[2780px] top-[1500px] h-[300px] w-[100px] bg-[repeating-linear-gradient(178deg,#5c3d0e_0px,#8a5a18_5px,#4a3510_9px,#a5661c_14px,#5c3d0e_19px)]" />
      <div className="absolute left-[18px] top-[1600px] h-[94px] w-[2800px] rounded-[12px] bg-[#b5b5b5]">
        <div className="ml-[56px] h-[87px] w-[474px] rounded-b-[8px] border-2 border-[#9a9a9a]" />
      </div>
      <Browser />
      <div className="absolute left-0 top-[172px] h-[1512px] w-[2px] bg-[#8d8d8d]" />
      <div className="absolute left-[2px] top-[172px] h-[1512px] w-[512px] rounded-bl-[12px] bg-[#1b202a]" />
      <div className="absolute left-0 top-[612px] h-[48px] w-[2px] bg-[#9a6a1c]" />
      <Phone />
      <svg className="absolute left-[444px] top-[1648px] h-1 w-[10px]" viewBox="0 0 10 4"><path d="M0 0 H10 L6 4Z" fill="#8c8c8c" /></svg>
      <div className="absolute left-[254px] top-[1667px] h-[60px] w-[255px] rounded-t-[10px] border-2 border-[#3c3f44] bg-[#1a1a1a] text-center text-[26px] font-semibold leading-[58px] tracking-[-0.3px] text-[#c8c8c8]">iPhone XR - 12.1</div>
      <Dock />
      <MenuBar />
    </div>
  );
}
